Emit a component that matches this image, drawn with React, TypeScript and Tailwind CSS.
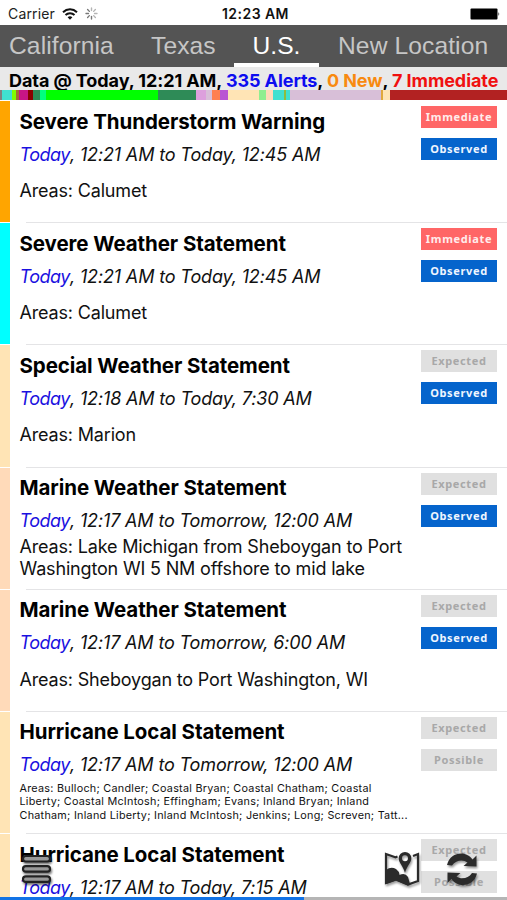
import type { ReactNode } from 'react';

type Alert = {
  title: string;
  period: string;
  areas: string[];
  stripe: string;
  urgency: 'Immediate' | 'Expected';
  certainty: 'Observed' | 'Possible';
  small?: boolean;
};

const alerts: Alert[] = [
  { title: 'Severe Thunderstorm Warning', period: ', 12:21 AM to Today, 12:45 AM', areas: ['Areas: Calumet'], stripe: 'bg-[#ffa500]', urgency: 'Immediate', certainty: 'Observed' },
  { title: 'Severe Weather Statement', period: ', 12:21 AM to Today, 12:45 AM', areas: ['Areas: Calumet'], stripe: 'bg-[#00ffff]', urgency: 'Immediate', certainty: 'Observed' },
  { title: 'Special Weather Statement', period: ', 12:18 AM to Today, 7:30 AM', areas: ['Areas: Marion'], stripe: 'bg-[#ffe4b5]', urgency: 'Expected', certainty: 'Observed' },
  { title: 'Marine Weather Statement', period: ', 12:17 AM to Tomorrow, 12:00 AM', areas: ['Areas: Lake Michigan from Sheboygan to Port', 'Washington WI 5 NM offshore to mid lake'], stripe: 'bg-[#ffdab9]', urgency: 'Expected', certainty: 'Observed' },
  { title: 'Marine Weather Statement', period: ', 12:17 AM to Tomorrow, 6:00 AM', areas: ['Areas: Sheboygan to Port Washington, WI'], stripe: 'bg-[#ffdab9]', urgency: 'Expected', certainty: 'Observed' },
  {
    title: 'Hurricane Local Statement',
    period: ', 12:17 AM to Tomorrow, 12:00 AM',
    areas: [
      'Areas: Bulloch; Candler; Coastal Bryan; Coastal Chatham; Coastal',
      'Liberty; Coastal McIntosh; Effingham; Evans; Inland Bryan; Inland',
      'Chatham; Inland Liberty; Inland McIntosh; Jenkins; Long; Screven; Tatt...',
    ],
    stripe: 'bg-[#ffe4b5]',
    urgency: 'Expected',
    certainty: 'Possible',
    small: true,
  },
  { title: 'Hurricane Local Statement', period: ', 12:17 AM to Today, 7:15 AM', areas: [], stripe: 'bg-[#ffe4b5]', urgency: 'Expected', certainty: 'Possible' },
];

// share of each alert type, [colour, weight]
const segments: [string, number][] = [
  ['bg-[#808080]', 2],
  ['bg-[#40e0d0]', 10],
  ['bg-[#7fff00]', 4],
  ['bg-[#a07030]', 3],
  ['bg-[#c71585]', 9],
  ['bg-[#8b0000]', 5],
  ['bg-[#2e8b57]', 7],
  ['bg-[#00ff7f]', 6],
  ['bg-[#00ff00]', 112],
  ['bg-[#2e8b57]', 37.5],
  ['bg-[#dda0dd]', 10.5],
  ['bg-[#d8bfd8]', 6],
  ['bg-[#ff7f50]', 7.5],
  ['bg-[#ba55d3]', 8],
  ['bg-[#ffe4b5]', 31.5],
  ['bg-[#90ee90]', 6.5],
  ['bg-[#ffdab9]', 7.5],
  ['bg-[#40e0d0]', 11],
  ['bg-[#8fbc3f]', 2],
  ['bg-[#40e0d0]', 3.5],
  ['bg-[#d8bfd8]', 91.5],
  ['bg-[#e0a83c]', 2],
  ['bg-[#ffe4b5]', 7],
  ['bg-[#b22222]', 117],
];

const tagColors = {
  Immediate: 'bg-[#ff6666] text-[#ffecec]',
  Observed: 'bg-[#0564cc] text-[#eef5ff]',
  Expected: 'bg-[#e0e0e0] text-[#a8a8a8]',
  Possible: 'bg-[#e0e0e0] text-[#a8a8a8]',
};

function Tag({ children }: { children: keyof typeof tagColors }) {
  return (
    <span className={`flex h-[22px] w-[76px] items-center justify-center pb-px font-['Noto_Sans',sans-serif] text-[11px] leading-none font-bold tracking-[0.65px] ${tagColors[children]}`}>
      {children}
    </span>
  );
}

function Line({ className, children }: { className: string; children: ReactNode }) {
  return <p className={`whitespace-nowrap ${className}`}>{children}</p>;
}

function AlertRow({ alert }: { alert: Alert }) {
  const many = alert.areas.length > 1;
  return (
    <li className="flex h-[122.2px] shrink-0">
      <div className={`mb-px w-[9.5px] shrink-0 ${alert.stripe}`} />
      <div className="relative min-w-0 flex-1 pl-[10px]">
        <div className="flex h-full justify-between">
          <div className="w-[395px] pt-[7.5px]">
            <Line className="text-[20.5px] leading-[26px] font-bold tracking-[-0.08px] text-black">{alert.title}</Line>
            <Line className="mt-[7px] text-[18px] leading-[26px] tracking-[-0.15px] italic">
              <span className="tracking-[-0.5px] text-[#1a10e0]">Today</span>
              {alert.period}
            </Line>
            <div className={alert.small ? 'mt-[3.5px]' : many ? 'mt-[2px]' : 'mt-[12.5px]'}>
              {alert.areas.map((area) => (
                <Line key={area} className={alert.small ? 'text-[10.8px] leading-[13.3px] tracking-[0.26px]' : 'text-[18px] leading-[21.5px] tracking-[-0.17px]'}>
                  {area}
                </Line>
              ))}
            </div>
          </div>
          <div className="flex flex-col gap-[10px] pt-[5px] pr-[10px]">
            <Tag>{alert.urgency}</Tag>
            <Tag>{alert.certainty}</Tag>
          </div>
        </div>
        <div className="absolute right-0 bottom-0 left-[16px] h-px bg-[#e4e4e6]" />
      </div>
    </li>
  );
}

function StatusBar() {
  return (
    <div className="flex h-[25px] shrink-0 items-center bg-white pt-[2px] text-[14px] text-[#222]">
      <div className="flex w-[222px] items-center pl-[8px]">
        <span className="w-[54px] tracking-[0.15px]">Carrier</span>
        <svg className="h-[12px] w-[16px]" viewBox="0 0 16 12" fill="none" stroke="#111" strokeWidth="2">
          <path d="M1 4.2C5 .4 11 .4 15 4.2M3.5 7C6 4.6 10 4.6 12.5 7" />
          <path d="M8 11.8 5.6 9.2Q8 7.2 10.4 9.2Z" fill="#111" stroke="none" />
        </svg>
        <svg className="ml-[7px] h-[13px] w-[13px]" viewBox="-6.5 -6.5 13 13" stroke="#777" strokeWidth="1.4" strokeLinecap="round">
          {[0, 45, 90, 135, 180, 225, 270, 315].map((angle) => (
            <path key={angle} d="M0-3V-5.5" transform={`rotate(${angle})`} opacity={angle < 180 ? 0.55 : 1} />
          ))}
        </svg>
      </div>
      <span className="text-[14px] font-semibold tracking-[0.45px] whitespace-nowrap text-[#111]">12:23 AM</span>
      <div className="flex flex-1 justify-end pr-[7px]">
        <svg className="h-[12px] w-[30px]" viewBox="0 0 30 12">
          <rect x="0.5" y="0.5" width="27" height="11" rx="1" />
          <path d="M28.5 4Q30 6 28.5 8Z" />
        </svg>
      </div>
    </div>
  );
}

function Nav() {
  return (
    <nav className="flex h-[42px] shrink-0 bg-[#545454] font-['Liberation_Sans',Arial,sans-serif] text-[24.6px] leading-[42px] whitespace-nowrap text-[#c6c6c6]">
      <span className="w-[151px] pl-[9px] tracking-[0.1px]">California</span>
      <span className="w-[83px] tracking-[0.1px]">Texas</span>
      <span className="w-[85px] border-b-4 border-white text-center text-white">U.S.</span>
      <span className="pl-[19px] tracking-[0.1px]">New Location</span>
    </nav>
  );
}

export default function App() {
  return (
    <div className="relative flex h-[900px] w-[507px] flex-col overflow-hidden bg-white font-['Inter',sans-serif] text-[#111]">
      <StatusBar />
      <Nav />
      <div className="flex h-[23px] shrink-0 items-center bg-[#e9e9e9] pt-[3.5px] pl-[9px] text-[18px] font-bold tracking-[-0.08px] whitespace-pre text-black">
        <span>Data @ Today, 12:21 AM, </span>
        <span className="text-[#0d0df0]">335 Alerts</span>
        <span>, </span>
        <span className="text-[#f88a10]">0 New</span>
        <span>, </span>
        <span className="text-[#f01010]">7 Immediate</span>
      </div>
      <div className="flex h-[10px] shrink-0">
        {segments.map(([color, weight], i) => (
          <div key={i} className={color} style={{ flexGrow: weight }} />
        ))}
      </div>
      <ul className="flex min-h-0 flex-1 flex-col overflow-hidden pt-px">
        {alerts.map((alert, i) => (
          <AlertRow key={i} alert={alert} />
        ))}
      </ul>

      {/* floating actions */}
      <button className="absolute top-[853px] left-[20px]" aria-label="Menu">
        <svg className="h-[33px] w-[34px] drop-shadow-[1px_2px_1px_#0008]" viewBox="0 0 34 33" fill="#999" stroke="#222" strokeWidth="2.2">
          <rect x="3" y="3" width="27" height="5.5" rx="2.7" />
          <rect x="3" y="13.2" width="27" height="5.5" rx="2.7" />
          <rect x="3" y="23.4" width="27" height="5.5" rx="2.7" />
        </svg>
      </button>
      <button className="absolute top-[850px] left-[383px]" aria-label="Map">
        <svg className="h-[39px] w-[38px] drop-shadow-[1px_2px_1px_#0006]" viewBox="0 0 38 39" fill="#2b2b2b">
          <path d="M13 7.500 3 4V33L13 29.500 25 34.500 35 31V4L30 6M12 7.500 14.500 6.500" fill="none" stroke="#2b2b2b" strokeWidth="2.2" />
          <path d="M3 20Q8 16 13 19 16 21 16.500 25 22 22 25 27L27 34 25 35.500 13 30.500 3 34Z" />
          <path fillRule="evenodd" d="M22 2A6.300 6.300 0 0 1 28.300 8.300C28.300 13 24 15.500 22 23 20 15.500 15.700 13 15.700 8.300A6.300 6.300 0 0 1 22 2ZM22 5.200A3 3 0 1 0 22 11.200 3 3 0 0 0 22 5.200Z" />
        </svg>
      </button>
      <button className="absolute top-[851px] left-[445px]" aria-label="Refresh">
        <svg className="h-[37px] w-[34px] drop-shadow-[1px_2px_1px_#0006]" viewBox="0 0 34 37" fill="#2b2b2b">
          <path d="M2 14C4 6 10 2.500 16 2.500 21 2.500 25 5 27.500 8.500L31.500 4.500V15.500L18.500 15 22.500 11.500C18 8 11 9 7 14.500Z" />
          <path d="M32 22.500C30 30.500 24 34 18 34 13 34 9 31.500 6.500 28L2.500 32V21.500L15.500 22 11.500 25.500C16 28.500 23 28 27 22Z" />
        </svg>
      </button>
      <div className="absolute inset-x-0 bottom-0 h-[3px] bg-[#b5b5b5]">
        <div className="h-full w-[304px] bg-[#1273e6]" />
      </div>
    </div>
  );
}
